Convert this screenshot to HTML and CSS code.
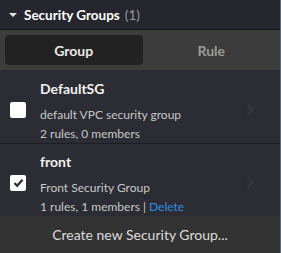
FILE: index.html
```html
<!DOCTYPE html>
<html>
<head>
<meta charset="utf-8">
<link rel="stylesheet" href="styles.css">
</head>
<body>
<div class="panel">
  <div class="main">
    <div class="header">
      <span class="caret"></span>
      <span class="title">Security Groups</span>
      <span class="count">(1)</span>
    </div>
    <div class="tabs">
      <div class="tab active">Group</div>
      <div class="tab">Rule</div>
    </div>
    <div class="list">
      <div class="row first">
        <div class="check"></div>
        <div class="info">
          <div class="name">DefaultSG</div>
          <div class="desc">default VPC security group</div>
          <div class="meta">2 rules, 0 members</div>
        </div>
        <svg class="chev" width="8" height="13" viewBox="0 0 8 13"><path d="M1.5 1.5 L6.5 6.5 L1.5 11.5" fill="none" stroke="#36373f" stroke-width="2"/></svg>
      </div>
      <div class="row second">
        <div class="check"><svg width="11" height="10" viewBox="0 0 11 10"><path d="M1.5 5 L4.2 7.8 L9.5 1.8" fill="none" stroke="#333" stroke-width="2.4"/></svg></div>
        <div class="info">
          <div class="name">front</div>
          <div class="desc">Front Security Group</div>
          <div class="meta">1 rules, 1 members <span class="sep">|</span><span class="del">Delete</span></div>
        </div>
        <svg class="chev" width="8" height="13" viewBox="0 0 8 13"><path d="M1.5 1.5 L6.5 6.5 L1.5 11.5" fill="none" stroke="#36373f" stroke-width="2"/></svg>
      </div>
    </div>
    <div class="footer">Create new Security Group...</div>
  </div>
  <div class="edge"></div>
</div>
</body>
</html>
```
FILE: styles.css
```css
html, body { margin: 0; padding: 0; }
body { width: 281px; height: 253px; overflow: hidden; background: #2b2c34; font-family: Lato, "Open Sans", sans-serif; }
.panel { display: flex; height: 253px; }
.main { width: 280px; display: flex; flex-direction: column; }
.edge { width: 1px; background: #5b6a78; }
.header { height: 29px; flex: none; background: #25262e; border-bottom: 1px solid #15161a; display: flex; align-items: center; padding-left: 9px; color: #fff; }
.caret { width: 0; height: 0; border-left: 4px solid transparent; border-right: 4px solid transparent; border-top: 4px solid #e6e6e6; margin-right: 7px; margin-top: 1px; }
.title { font-weight: 700; font-size: 13.5px; }
.count { font-size: 13.5px; color: #9a9a9a; margin-left: 5px; }
.tabs { height: 40px; flex: none; background: #3c3c3c; display: flex; padding: 5px 0 5px 5px; box-sizing: border-box; }
.tab { flex: 1; display: flex; align-items: center; justify-content: center; font-weight: 700; font-size: 14px; color: #9b9b9b; border-radius: 4px; }
.tab.active { background: #222222; color: #eaeaea; }
.list { display: flex; flex-direction: column; }
.row { display: flex; align-items: flex-start; padding-left: 10px; box-sizing: border-box; }
.row.first { height: 74px; padding-top: 11px; border-bottom: 1px solid #1d1e23; }
.row.second { height: 72px; padding-top: 10px; }
.check { width: 16px; height: 16px; background: #fff; border-radius: 2px; display: flex; align-items: center; justify-content: center; margin-top: 21px; flex: none; }
.info { margin-left: 14px; flex: 1; }
.name { font-weight: 700; font-size: 14px; line-height: 16px; color: #f2f2f2; margin-bottom: 11px; }
.desc { font-size: 12px; line-height: 14px; color: #c8c8c8; margin-bottom: 5px; }
.meta { font-size: 12px; line-height: 14px; color: #c8c8c8; }
.sep { color: #c8c8c8; margin-right: 3px; }
.del { color: #2d8ce6; }
.chev { margin-right: 26px; margin-top: 22px; flex: none; }
.footer { height: 37px; flex: none; background: #333333; display: flex; align-items: center; justify-content: center; font-size: 14px; color: #dcdcdc; }
```
